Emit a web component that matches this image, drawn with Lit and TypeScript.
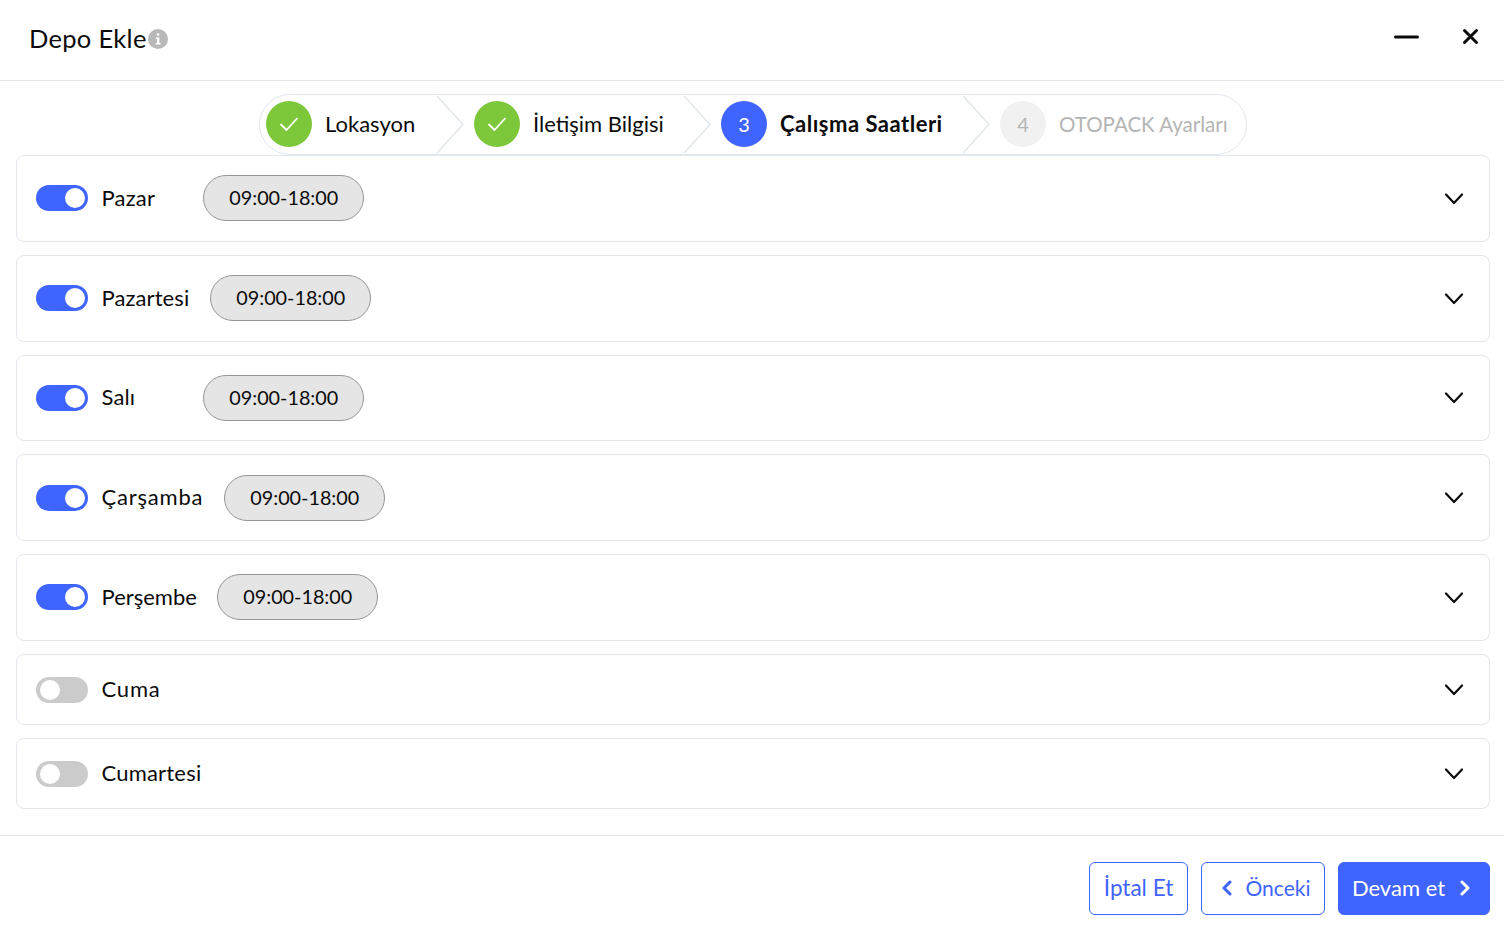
import { LitElement, html, css, svg } from "lit";
import { customElement } from "lit/decorators.js";
import { styleMap } from "lit/directives/style-map.js";

const days = [
  { name: "Pazar", on: true, w: 81, ls: 0.2 },
  { name: "Pazartesi", on: true, w: 88, ls: 0.1 },
  { name: "Salı", on: true, w: 81, ls: 0.1 },
  { name: "Çarşamba", on: true, w: 102, ls: 0.8 },
  { name: "Perşembe", on: true, w: 95, ls: 0 },
  { name: "Cuma", on: false, w: 81, ls: 0.8 },
  { name: "Cumartesi", on: false, w: 100, ls: 0.2 },
];

const steps = [
  { n: "", label: "Lokasyon", state: "done" },
  { n: "", label: "İletişim Bilgisi", state: "done" },
  { n: "3", label: "Çalışma Saatleri", state: "active" },
  { n: "4", label: "OTOPACK Ayarları", state: "todo" },
];

const check = svg`<path d="M15 23.5 L20.5 29 L31 17.5" fill="none" stroke="#fff" stroke-width="1.8" stroke-linecap="round" stroke-linejoin="round"/>`;

@customElement("app-root")
export class AppRoot extends LitElement {
  static styles = css`
    :host { display: block; width: 1504px; height: 934px; overflow: hidden; background: #fff; color: #0b0b0b;
      font-family: "Lato", "Noto Sans", sans-serif; font-size: 20px; }
    .page { display: flex; flex-direction: column; height: 934px; }
    .header { height: 80px; border-bottom: 1px solid #e1e7ec; display: flex; align-items: center; padding: 0 25px 0 29px; box-sizing: content-box; flex: none; }
    .title { font-size: 25.5px; line-height: 1; letter-spacing: 0.3px; margin-bottom: 2px; }
    .info { margin-left: 1px; width: 20px; height: 20px; display: block; margin-bottom: 2px; }
    .spacer { flex: 1; }
    .hbtns { display: flex; align-items: center; gap: 43px; margin-top: -7px; }
    .hbtns svg { display: block; }
    .stepper-wrap { display: flex; justify-content: center; padding: 13px 0 0 2px; flex: none; }
    .stepper { box-sizing: border-box; width: 988px; height: 61px; border: 1px solid #e1e7ec; border-radius: 31px; display: grid; grid-template-columns: 208px 247px 279px 247px; padding-left: 6px; }
    .step { position: relative; display: flex; align-items: center; gap: 13px; }
    .circle { box-sizing: border-box; width: 46px; height: 46px; margin-bottom: 1px; border-radius: 50%; display: flex; align-items: center; justify-content: center; flex: none; font-size: 20px; color: #fff; }
    .num { margin-bottom: 1px; }
    .done .circle { background: #7dc73a; }
    .active .circle { background: #4064ff; }
    .todo .circle { background: #f1f1f1; color: #b5b5b5; }
    .label { white-space: nowrap; font-size: 22px; margin-bottom: 2px; }
    .active .label { font-weight: 700; letter-spacing: 0.5px; }
    .todo .label { color: #b5b5b5; font-size: 20.5px; }
    .arrow { position: absolute; left: 170px; top: 0; }
    .step:nth-child(2) .arrow { left: 209px; }
    .step:nth-child(3) .arrow { left: 241px; }
    .rows { display: flex; flex-direction: column; gap: 13px; padding: 0 14px 0 16px; flex: none; }
    .row { box-sizing: border-box; height: 86.75px; border: 1px solid #e1e7ec; border-radius: 8px; display: flex; align-items: center; padding: 0 25px 0 19px; }
    .row.off { height: 71px; }
    .toggle { position: relative; width: 52px; height: 26px; border-radius: 13px; background: #4064ff; flex: none; }
    .toggle::after { content: ""; position: absolute; top: 3px; right: 3px; width: 20px; height: 20px; border-radius: 50%; background: #fff; }
    .toggle.off { background: #cbcbcb; margin-top: 1px; }
    .toggle.off::after { right: auto; left: 4px; }
    .name { margin-left: 13.5px; margin-bottom: 2px; font-size: 22px; white-space: nowrap; flex: none; }
    .pill { box-sizing: border-box; margin-left: 20px; width: 161.5px; height: 46px; padding: 0 0 2px 1px; border: 1px solid #969696; border-radius: 23px; background: #e5e5e5; display: flex; align-items: center; justify-content: center; font-size: 19.8px; }
    .chev { margin-left: auto; margin-top: 1px; display: block; }
    .footer { margin-top: 26px; border-top: 1px solid #e6e6e6; padding: 26px 14px 0 0; display: flex; justify-content: flex-end; gap: 13px; flex: none; }
    .btn { box-sizing: border-box; height: 53px; padding-bottom: 2px; border: 1px solid #4064ff; border-radius: 6px; background: #fff; color: #4064ff; display: flex; align-items: center; justify-content: center; gap: 13px; font-size: 21.5px; }
    .btn svg { margin-top: 2px; }
    .btn.cancel { width: 99px; font-size: 22.5px; }
    .btn.prev { width: 124px; font-size: 21px; padding-left: 5px; }
    .btn.next { width: 152px; background: #4064ff; color: #fff; font-size: 22px; gap: 14px; padding-right: 5px; }
  `;

  render() {
    return html`<div class="page">
      <div class="header">
        <span class="title">Depo Ekle</span>
        <svg class="info" viewBox="0 0 20 20"><circle cx="10" cy="10" r="10" fill="#b8b8b8"/><rect x="8.8" y="4.2" width="2.6" height="2.6" rx="1.2" fill="#fff"/><path d="M7.8 8.4h3.6v5.6h1.2v1.6H7.6V14h1.4v-4H7.8z" fill="#fff"/></svg>
        <div class="spacer"></div>
        <div class="hbtns">
          <svg width="25" height="6" viewBox="0 0 25 6"><path d="M1.5 3H23.5" stroke="#0b0b0b" stroke-width="3" stroke-linecap="round"/></svg>
          <svg width="17" height="17" viewBox="0 0 17 17"><path d="M2.5 2.5L14.5 14.5M14.5 2.5L2.5 14.5" stroke="#0b0b0b" stroke-width="3" stroke-linecap="round"/></svg>
        </div>
      </div>
      <div class="stepper-wrap">
        <div class="stepper">
          ${steps.map((s, i) => html`<div class="step ${s.state}">
            <div class="circle">${s.n ? html`<span class="num">${s.n}</span>` : html`<svg width="46" height="46" viewBox="0 0 46 46">${check}</svg>`}</div>
            <span class="label">${s.label}</span>
            ${i < 3 ? html`<svg class="arrow" width="28" height="59" viewBox="0 0 28 59"><path d="M1 1 L27 29.5 L1 58" fill="none" stroke="#e1e7ec" stroke-width="1.5"/></svg>` : ""}
          </div>`)}
        </div>
      </div>
      <div class="rows">
        ${days.map((d) => html`<div class="row ${d.on ? "" : "off"}">
          <div class="toggle ${d.on ? "" : "off"}"></div>
          <span class="name" style=${styleMap({ width: `${d.w}px`, letterSpacing: `${d.ls}px` })}>${d.name}</span>
          ${d.on ? html`<div class="pill">09:00-18:00</div>` : ""}
          <svg class="chev" width="20" height="14" viewBox="0 0 20 14"><path d="M2 2.5L10 11L18 2.5" fill="none" stroke="#0b0b0b" stroke-width="2.2" stroke-linecap="round" stroke-linejoin="round"/></svg>
        </div>`)}
      </div>
      <div class="footer">
        <div class="btn cancel">İptal Et</div>
        <div class="btn prev"><svg width="12" height="16" viewBox="0 0 12 16"><path d="M9 2L3 8L9 14" fill="none" stroke="#4064ff" stroke-width="3" stroke-linecap="round" stroke-linejoin="round"/></svg>Önceki</div>
        <div class="btn next">Devam et<svg width="12" height="16" viewBox="0 0 12 16"><path d="M3 2L9 8L3 14" fill="none" stroke="#fff" stroke-width="3" stroke-linecap="round" stroke-linejoin="round"/></svg></div>
      </div>
    </div>`;
  }
}
